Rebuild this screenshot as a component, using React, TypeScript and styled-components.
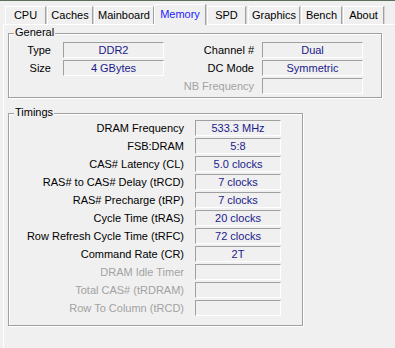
import React from "react";
import styled, { createGlobalStyle } from "styled-components";

const GlobalStyle = createGlobalStyle`
  html, body { margin: 0; padding: 0; background: #f0f0f0; }
  body {
    font-family: "Liberation Sans", Arial, sans-serif;
    font-size: 11px;
    color: #000;
    -webkit-font-smoothing: antialiased;
  }
`;

const Window = styled.div`
  width: 395px;
  height: 348px;
  overflow: hidden;
  border-top: 1px solid #5e6e5e;
  box-sizing: border-box;
  background: #f0f0f0;
`;

const TabStrip = styled.div`
  display: flex;
  align-items: flex-end;
  height: 23px;
`;

const Tab = styled.div<{ $w: number; $ml: number; $active?: boolean }>`
  box-sizing: border-box;
  width: ${(p) => p.$w}px;
  margin-left: ${(p) => p.$ml}px;
  height: ${(p) => (p.$active ? 21 : 18)}px;
  margin-bottom: ${(p) => (p.$active ? -1 : 0)}px;
  position: relative;
  z-index: ${(p) => (p.$active ? 2 : 1)};
  background: #f0f0f0;
  border-left: 1px solid #fff;
  border-top: 1px solid #fff;
  border-right: 1px solid #a0a0a0;
  box-shadow: 1px 0 0 #d4d4d4;
  display: flex;
  align-items: ${(p) => (p.$active ? "flex-start" : "center")};
  padding-top: ${(p) => (p.$active ? 3 : 0)}px;
  justify-content: center;
  line-height: 13px;
  color: ${(p) => (p.$active ? "#2222ff" : "#000")};
`;

const Panel = styled.div`
  margin-left: 3px;
  border-top: 1px solid #fff;
  border-left: 1px solid #fff;
  padding: 8px 0 0 4px;
  height: 330px;
`;

const Group = styled.div<{ $w: number; $h: number; $mt?: number }>`
  position: relative;
  box-sizing: border-box;
  width: ${(p) => p.$w}px;
  height: ${(p) => p.$h}px;
  margin-top: ${(p) => p.$mt ?? 0}px;
  border: 1px solid #a0a0a0;
  box-shadow: inset 1px 1px 0 #fff, 1px 1px 0 #fff;
`;

const GroupTitle = styled.span`
  position: absolute;
  left: 5px;
  top: -8px;
  padding: 0 1px;
  background: #f0f0f0;
  line-height: 13px;
`;

const GeneralBody = styled.div`
  display: flex;
  padding: 8px 0 0 0;
`;

const Column = styled.div`
  display: flex;
  flex-direction: column;
  gap: 2px;
`;

const Row = styled.div`
  display: flex;
  align-items: center;
  height: 16px;
`;

const Label = styled.span<{ $w: number; $disabled?: boolean }>`
  width: ${(p) => p.$w}px;
  text-align: right;
  white-space: nowrap;
  line-height: 13px;
  color: ${(p) => (p.$disabled ? "#a2a2a2" : "#000")};
`;

const Field = styled.div<{ $w: number; $ml: number }>`
  box-sizing: border-box;
  width: ${(p) => p.$w}px;
  height: 16px;
  margin-left: ${(p) => p.$ml}px;
  border-top: 1px solid #a0a0a0;
  border-left: 1px solid #a0a0a0;
  border-bottom: 1px solid #fff;
  border-right: 1px solid #fff;
  color: #1a1a8c;
  text-align: center;
  line-height: 14px;
  white-space: nowrap;
`;

const TimingsBody = styled.div`
  display: flex;
  flex-direction: column;
  gap: 2px;
  padding-top: 6px;
`;

const tabs = [
  { name: "CPU", w: 41, ml: 5 },
  { name: "Caches", w: 46, ml: 1 },
  { name: "Mainboard", w: 60, ml: 1 },
  { name: "Memory", w: 52, ml: 0, active: true },
  { name: "SPD", w: 39, ml: 1 },
  { name: "Graphics", w: 52, ml: 2 },
  { name: "Bench", w: 41, ml: 1 },
  { name: "About", w: 41, ml: 1 },
];

const timings: { label: string; value: string; disabled?: boolean }[] = [
  { label: "DRAM Frequency", value: "533.3 MHz" },
  { label: "FSB:DRAM", value: "5:8" },
  { label: "CAS# Latency (CL)", value: "5.0 clocks" },
  { label: "RAS# to CAS# Delay (tRCD)", value: "7 clocks" },
  { label: "RAS# Precharge (tRP)", value: "7 clocks" },
  { label: "Cycle Time (tRAS)", value: "20 clocks" },
  { label: "Row Refresh Cycle Time (tRFC)", value: "72 clocks" },
  { label: "Command Rate (CR)", value: "2T" },
  { label: "DRAM Idle Timer", value: "", disabled: true },
  { label: "Total CAS# (tRDRAM)", value: "", disabled: true },
  { label: "Row To Column (tRCD)", value: "", disabled: true },
];

export default function App() {
  return (
    <>
      <GlobalStyle />
      <Window>
        <TabStrip>
          {tabs.map((t) => (
            <Tab key={t.name} $w={t.w} $ml={t.ml} $active={t.active}>
              {t.name}
            </Tab>
          ))}
        </TabStrip>
        <Panel>
          <Group $w={374} $h={65}>
            <GroupTitle>General</GroupTitle>
            <GeneralBody>
              <Column>
                <Row>
                  <Label $w={42}>Type</Label>
                  <Field $w={101} $ml={12}>DDR2</Field>
                </Row>
                <Row>
                  <Label $w={42}>Size</Label>
                  <Field $w={101} $ml={12}>4 GBytes</Field>
                </Row>
              </Column>
              <Column>
                <Row>
                  <Label $w={90}>Channel #</Label>
                  <Field $w={101} $ml={8}>Dual</Field>
                </Row>
                <Row>
                  <Label $w={90}>DC Mode</Label>
                  <Field $w={101} $ml={8}>Symmetric</Field>
                </Row>
                <Row>
                  <Label $w={90} $disabled>NB Frequency</Label>
                  <Field $w={101} $ml={8}></Field>
                </Row>
              </Column>
            </GeneralBody>
          </Group>
          <Group $w={295} $h={213} $mt={15}>
            <GroupTitle>Timings</GroupTitle>
            <TimingsBody>
              {timings.map((t) => (
                <Row key={t.label}>
                  <Label $w={175} $disabled={t.disabled}>{t.label}</Label>
                  <Field $w={86} $ml={11}>{t.value}</Field>
                </Row>
              ))}
            </TimingsBody>
          </Group>
        </Panel>
      </Window>
    </>
  );
}
